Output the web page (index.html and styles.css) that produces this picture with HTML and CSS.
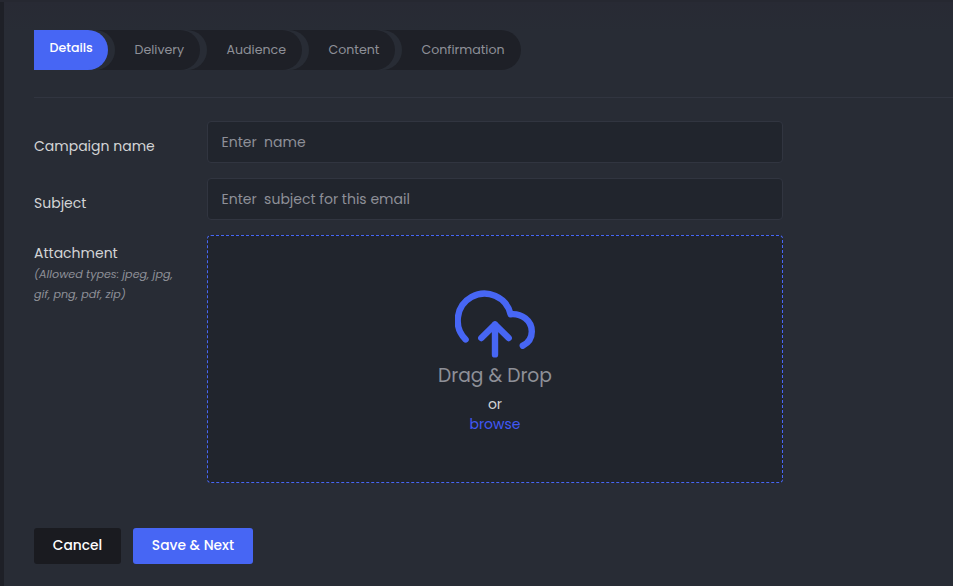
FILE: index.html
```html
<!DOCTYPE html>
<html lang="en">
<head>
<meta charset="utf-8">
<title>Campaign details</title>
<link rel="stylesheet" href="styles.css">
</head>
<body>
<div class="topbar"></div>
<div class="shell">
  <div class="sidebar"></div>
  <main class="content">
    <nav class="steps">
      <a class="step step-active">Details</a>
      <a class="step step-delivery">Delivery</a>
      <a class="step step-audience">Audience</a>
      <a class="step step-content">Content</a>
      <a class="step step-confirmation">Confirmation</a>
    </nav>
    <form class="form">
      <div class="row">
        <label class="label">Campaign name</label>
        <div class="field">Enter&nbsp; name</div>
      </div>
      <div class="row">
        <label class="label">Subject</label>
        <div class="field">Enter&nbsp; subject for this email</div>
      </div>
      <div class="row">
        <div class="label label-top">
          Attachment
          <em class="hint">(Allowed types: jpeg, jpg,<br>gif, png, pdf, zip)</em>
        </div>
        <div class="dropzone">
          <svg class="cloud" viewBox="0 0 80 68" width="80" height="68" fill="none" stroke="#4766f4" stroke-width="6.4" stroke-linecap="round" stroke-linejoin="round">
            <path d="M10.6 49.4A26.8 26.8 0 1 1 55.6 24.2C66.5 23.1 76.8 30.6 76.8 41.4C76.8 47.4 73.3 52.8 67.8 55.7"/>
            <path d="M40 64.4V34.4M26.3 48.1L40 34.4L53.7 48.1"/>
          </svg>
          <div class="drop-title">Drag &amp; Drop</div>
          <div class="drop-or">or</div>
          <a class="browse">browse</a>
        </div>
      </div>
      <div class="actions">
        <button type="button" class="btn btn-cancel">Cancel</button>
        <button type="button" class="btn btn-save">Save &amp; Next</button>
      </div>
    </form>
  </main>
</div>
</body>
</html>
```
FILE: styles.css
```css
* { box-sizing: border-box; }
body {
  margin: 0;
  height: 586px;
  overflow: hidden;
  background: #282c35;
  color: #d3d4d6;
  font-family: Poppins, Inter, sans-serif;
  font-size: 14px;
}
.topbar { height: 2px; background: #262831; }
.shell { display: flex; height: 584px; }
.sidebar { width: 4px; background: #1e2027; }
.content { flex: 1; padding: 28px 0 0 30px; background: linear-gradient(#282a34, #282c35 30px); }
.steps { display: flex; height: 68px; border-bottom: 1px solid #313540; }
.step {
  position: relative;
  display: flex;
  align-items: center;
  height: 40px;
  margin-left: -20px;
  padding-left: 46.5px;
  border-radius: 0 20px 20px 0;
  background: #1e2027;
  box-shadow: 7px 0 0 #282c35;
  color: #8e9098;
  font-size: 12.6px;
}
.step-active { z-index: 5; width: 74px; margin-left: 0; padding: 0 0 4px 15.5px; background: #4766f4; color: #fff; font-weight: 500; }
.step-delivery { z-index: 4; width: 112px; }
.step-audience { z-index: 3; width: 122px; }
.step-content { z-index: 2; width: 113px; }
.step-confirmation { z-index: 1; width: 146px; box-shadow: none; }
.form { display: flex; flex-direction: column; gap: 15px; padding-top: 23px; }
.row { display: flex; }
.label { width: 173px; padding-top: 14px; line-height: 22px; }
.label-top { padding-top: 7px; }
.hint { display: block; color: #8e9098; font-size: 11.15px; line-height: 20px; }
.field {
  display: flex;
  align-items: center;
  width: 576px;
  height: 42px;
  padding-left: 13.5px;
  border: 1px solid #313540;
  border-radius: 4px;
  background: #21252d;
  color: #8e9098;
}
.dropzone {
  display: flex;
  flex-direction: column;
  align-items: center;
  width: 576px;
  height: 248px;
  padding-top: 54px;
  border: 1px dashed #4766f4;
  border-radius: 4px;
  background: #21252d;
}
.cloud { display: block; }
.drop-title { margin-top: 3px; color: #8e9098; font-size: 18.67px; line-height: 30px; }
.drop-or { margin-top: 3px; line-height: 20px; }
.browse { color: #4058f5; line-height: 20px; }
.actions { display: flex; gap: 12px; margin-top: 30px; }
.btn { height: 36px; padding: 0 0 1px; border: 0; border-radius: 3px; color: #fff; font: 500 13.8px Poppins, Inter, sans-serif; }
.btn-cancel { width: 87px; background: #1a1b20; }
.btn-save { width: 120px; background: #4766f4; }
```
